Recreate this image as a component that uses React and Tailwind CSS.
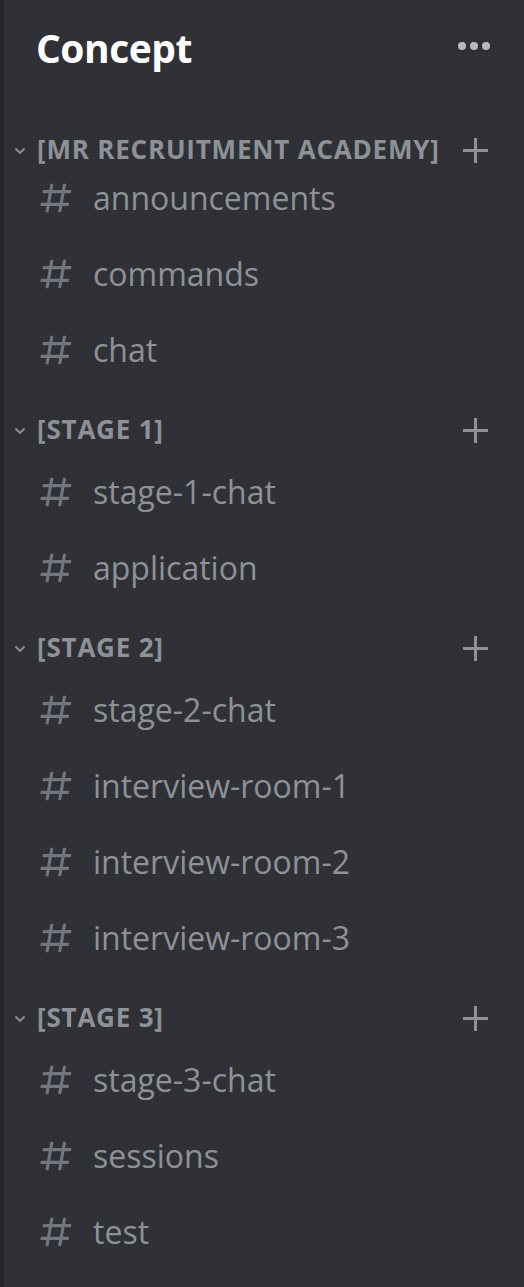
const groups = [
  { name: "[MR RECRUITMENT ACADEMY]", channels: ["announcements", "commands", "chat"] },
  { name: "[STAGE 1]", channels: ["stage-1-chat", "application"] },
  { name: "[STAGE 2]", channels: ["stage-2-chat", "interview-room-1", "interview-room-2", "interview-room-3"] },
  { name: "[STAGE 3]", channels: ["stage-3-chat", "sessions", "test"] },
];

function Hash() {
  return (
    <svg width="38" height="38" viewBox="0 0 24 24" className="shrink-0 -ml-[3px]">
      <path
        fill="#72767d"
        fillRule="evenodd"
        d="M5.88657 21C5.57547 21 5.3399 20.7189 5.39427 20.4126L6.00001 17H2.59511C2.28449 17 2.04905 16.7198 2.10259 16.4138L2.27759 15.4138C2.31946 15.1746 2.52722 15 2.77011 15H6.35001L7.41001 9H4.00511C3.69449 9 3.45905 8.71977 3.51259 8.41381L3.68759 7.41381C3.72946 7.17456 3.93722 7 4.18011 7H7.76001L8.39677 3.41262C8.43914 3.17391 8.64664 3 8.88907 3H9.87344C10.1845 3 10.4201 3.28107 10.3657 3.58738L9.76001 7H15.76L16.3968 3.41262C16.4391 3.17391 16.6466 3 16.8891 3H17.8734C18.1845 3 18.4201 3.28107 18.3657 3.58738L17.76 7H21.1649C21.4755 7 21.711 7.28023 21.6574 7.58619L21.4824 8.58619C21.4406 8.82544 21.2328 9 20.9899 9H17.41L16.35 15H19.7549C20.0655 15 20.301 15.2802 20.2474 15.5862L20.0724 16.5862C20.0306 16.8254 19.8228 17 19.5799 17H16L15.3632 20.5874C15.3209 20.8261 15.1134 21 14.8709 21H13.8866C13.5755 21 13.3399 20.7189 13.3943 20.4126L14 17H8.00001L7.36325 20.5874C7.32088 20.8261 7.11337 21 6.87094 21H5.88657ZM9.41045 9L8.35045 15H14.3504L15.4104 9H9.41045Z"
      />
    </svg>
  );
}

function Category({ name, first }) {
  return (
    <div className={`flex items-center h-[38px] ${first ? "mt-[36px]" : "mt-[30px]"}`}>
      <svg width="12" height="8" viewBox="0 0 12 8" className="ml-[10px] mr-[11px] mt-[4px]">
        <path d="M1.5 1.5 L6 6 L10.5 1.5" stroke="#8e9297" strokeWidth="1.8" fill="none" />
      </svg>
      <span className="flex-1 text-[26px] font-bold uppercase tracking-[0.8px] text-[#8e9297] leading-none whitespace-nowrap">
        {name}
      </span>
      <div className="relative w-[25px] h-[25px] mr-[36px] mt-[2px]">
        <div className="absolute left-[11px] top-0 w-[3px] h-[25px] bg-[#8e9297]" />
        <div className="absolute top-[11px] left-0 h-[3px] w-[25px] bg-[#8e9297]" />
      </div>
    </div>
  );
}

export default function App() {
  return (
    <div className="w-[524px] h-[1287px] bg-[#2f3136] border-l-4 border-[#25262a] font-['Open_Sans','Noto_Sans',sans-serif] overflow-hidden">
      <div className="flex items-center justify-between h-[94px] pl-[32px] pr-[34px]">
        <h1 className="text-[39px] font-bold text-white tracking-[-0.5px] leading-none">Concept</h1>
        <div className="flex gap-[4px] -mt-[2px]">
          <span className="w-[8px] h-[8px] rounded-full bg-[#b9bbbe]" />
          <span className="w-[8px] h-[8px] rounded-full bg-[#b9bbbe]" />
          <span className="w-[8px] h-[8px] rounded-full bg-[#b9bbbe]" />
        </div>
      </div>
      {groups.map((g, gi) => (
        <div key={g.name}>
          <Category name={g.name} first={gi === 0} />
          <div className={`flex flex-col gap-[16px] ${gi === 0 ? "mt-0" : "mt-[14px]"}`}>
            {g.channels.map((c) => (
              <div key={c} className="flex items-center h-[60px] pl-[36px]">
                <Hash />
                <span className="ml-[18px] text-[32px] text-[#8e9297] leading-none">{c}</span>
              </div>
            ))}
          </div>
        </div>
      ))}
    </div>
  );
}
